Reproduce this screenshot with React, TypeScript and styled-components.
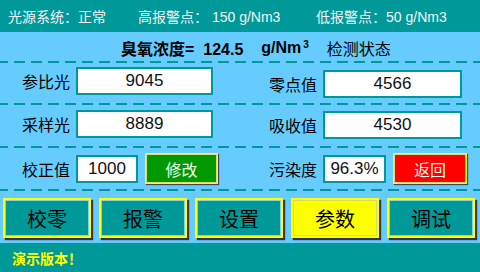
import React from "react";
import styled, { createGlobalStyle } from "styled-components";

// Colours
const teal = "#009999";
const sky = "#66CCFF";
const cjk = `"Liberation Sans", "Noto Sans CJK SC", sans-serif`;

const GlobalStyle = createGlobalStyle`
  html, body {
    margin: 0;
    padding: 0;
    background: ${sky};
  }
  * {
    box-sizing: border-box;
  }
`;

// Style
const Screen = styled.div`
  width: 480px;
  height: 272px;
  background-color: ${sky};
  font-family: ${cjk};
  display: flex;
  flex-direction: column;
  overflow: hidden;
`;

const TopBar = styled.div`
  height: 32px;
  background-color: ${teal};
  color: #f4f4f4;
  font-size: 14px;
  display: flex;
  align-items: center;
  padding-left: 8px;
  white-space: pre;
`;

const TopItem = styled.span<{ $w: number }>`
  width: ${(p) => p.$w}px;
  flex: none;
`;

const Title = styled.div`
  height: 29px;
  display: flex;
  align-items: center;
  padding-left: 121px;
  padding-top: 3px;
  color: #000;
  font-size: 16px;
  white-space: pre;
`;

const Bold = styled.span`
  font-weight: bold;
`;

const Unit = styled.span`
  font-weight: bold;
  margin-left: 18px;
  sup {
    font-size: 10px;
    position: relative;
    top: 0;
    vertical-align: top;
    margin-left: 2px;
  }
`;

const Status = styled.span`
  margin-left: 18px;
`;

const Dash = styled.div`
  height: 2px;
  flex: none;
  background-image: repeating-linear-gradient(
    to right,
    ${teal} 0 11px,
    transparent 11px 17px
  );
  background-position: -3px 0;
`;

const Row = styled.div<{ $h: number }>`
  height: ${(p) => p.$h}px;
  display: grid;
  grid-template-columns: 240px 240px;
`;

// $shift moves the cell content down (positive) or up (negative)
const Cell = styled.div<{ $left: number; $shift: number }>`
  display: flex;
  align-items: center;
  padding-left: ${(p) => p.$left}px;
  padding-top: ${(p) => Math.max(0, p.$shift * 2)}px;
  padding-bottom: ${(p) => Math.max(0, -p.$shift * 2)}px;
`;

const Label = styled.div`
  width: 54px;
  text-align: right;
  font-size: 16px;
  color: #000;
  margin-right: 6px;
`;

const ValueBox = styled.div<{ $w: number }>`
  width: ${(p) => p.$w}px;
  height: 28px;
  background: #fff;
  border: 2px solid ${teal};
  display: flex;
  align-items: center;
  justify-content: center;
  font-size: 17px;
  color: #111;
`;

const ActionButton = styled.div<{ $bg: string; $w: number }>`
  width: ${(p) => p.$w}px;
  height: 31px;
  margin-left: 7px;
  background: ${(p) => p.$bg};
  border: 1px solid #ffff00;
  box-shadow: inset 0 0 0 1px #dddd66, 1px 1px 1px #445;
  color: #f0fff0;
  font-size: 16px;
  display: flex;
  align-items: center;
  justify-content: center;
`;

const ButtonBar = styled.div`
  height: 52px;
  display: flex;
  align-items: flex-start;
  gap: 8px;
  padding: 7px 0 0 3px;
`;

const MenuButton = styled.div<{ $active?: boolean }>`
  width: 88px;
  height: 40px;
  background: ${(p) => (p.$active ? "#ffff00" : teal)};
  border: 2px solid #ffff00;
  box-shadow: inset 0 0 0 1px ${(p) => (p.$active ? "#d8d870" : "#7fd4e6")},
    2px 2px 1px #334;
  color: #000;
  font-size: 20px;
  display: flex;
  align-items: center;
  justify-content: center;
`;

const Footer = styled.div`
  flex: 1;
  background: ${teal};
  color: #ffff00;
  font-weight: bold;
  font-size: 14px;
  font-family: "Noto Sans CJK SC", sans-serif;
  display: flex;
  align-items: center;
  padding-left: 12px;
`;

const menu = ["校零", "报警", "设置", "参数", "调试"];

function App() {
  return (
    <Screen>
      <GlobalStyle />
      <TopBar>
        <TopItem $w={130}>光源系统：正常</TopItem>
        <TopItem $w={178}>高报警点： 150 g/Nm3</TopItem>
        <TopItem $w={150}>低报警点：50 g/Nm3</TopItem>
      </TopBar>
      <Title>
        <Bold>臭氧浓度=  124.5</Bold>
        <Unit>
          g/Nm<sup>3</sup>
        </Unit>
        <Status>检测状态</Status>
      </Title>
      <Dash />
      <Row $h={40}>
        <Cell $left={16} $shift={-2}>
          <Label>参比光</Label>
          <ValueBox $w={137}>9045</ValueBox>
        </Cell>
        <Cell $left={23} $shift={1}>
          <Label>零点值</Label>
          <ValueBox $w={139}>4566</ValueBox>
        </Cell>
      </Row>
      <Dash />
      <Row $h={41}>
        <Cell $left={16} $shift={-2}>
          <Label>采样光</Label>
          <ValueBox $w={137}>8889</ValueBox>
        </Cell>
        <Cell $left={23} $shift={-1}>
          <Label>吸收值</Label>
          <ValueBox $w={139}>4530</ValueBox>
        </Cell>
      </Row>
      <Dash />
      <Row $h={41}>
        <Cell $left={16} $shift={0}>
          <Label>校正值</Label>
          <ValueBox $w={62}>1000</ValueBox>
          <ActionButton $bg="#009900" $w={73}>
            修改
          </ActionButton>
        </Cell>
        <Cell $left={23} $shift={0}>
          <Label>污染度</Label>
          <ValueBox $w={63}>96.3%</ValueBox>
          <ActionButton $bg="#ff0000" $w={74}>
            返回
          </ActionButton>
        </Cell>
      </Row>
      <Dash />
      <ButtonBar>
        {menu.map((m) => (
          <MenuButton key={m} $active={m === "参数"}>
            {m}
          </MenuButton>
        ))}
      </ButtonBar>
      <Footer>演示版本！</Footer>
    </Screen>
  );
}

export default App;
